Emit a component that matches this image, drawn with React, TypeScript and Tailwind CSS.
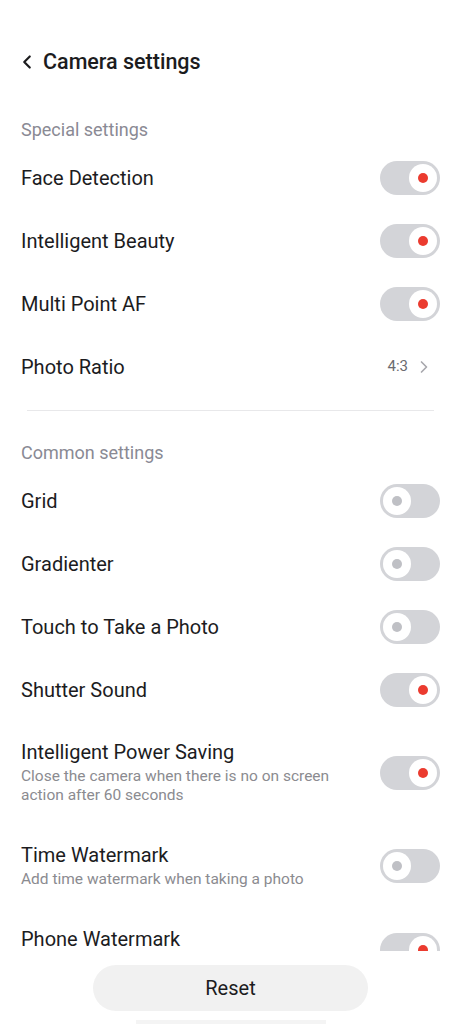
import { ChevronLeft, ChevronRight } from "lucide-react";

type Row = {
  title: string;
  sub?: string;
  on?: boolean;
  value?: string;
};

const SPECIAL: Row[] = [
  { title: "Face Detection", on: true },
  { title: "Intelligent Beauty", on: true },
  { title: "Multi Point AF", on: true },
  { title: "Photo Ratio", value: "4:3" },
];

const COMMON: Row[] = [
  { title: "Grid", on: false },
  { title: "Gradienter", on: false },
  { title: "Touch to Take a Photo", on: false },
  { title: "Shutter Sound", on: true },
];

const DETAILED: Row[] = [
  {
    title: "Intelligent Power Saving",
    sub: "Close the camera when there is no on screen action after 60 seconds",
    on: true,
  },
  { title: "Time Watermark", sub: "Add time watermark when taking a photo", on: false },
  { title: "Phone Watermark", on: true },
];

function Toggle({ on }: { on: boolean }) {
  return (
    <div
      className={`flex h-[34px] w-[60px] shrink-0 items-center rounded-full bg-[#d3d4d8] px-[3px] ${
        on ? "justify-end" : "justify-start"
      }`}
    >
      <div className="flex h-[28px] w-[28px] items-center justify-center rounded-full bg-white">
        <div className={`h-[10px] w-[10px] rounded-full ${on ? "bg-[#eb3b2f]" : "bg-[#bfc0c5]"}`} />
      </div>
    </div>
  );
}

function SimpleRow({ row }: { row: Row }) {
  return (
    <div className="flex h-[63px] items-center justify-between pl-[21px] pr-[21px]">
      <span className="text-[20px] text-[#1c1c1e]">{row.title}</span>
      {row.value ? (
        <div className="-mr-[2px] flex items-center gap-[6px] pr-[8px] text-[#6b6b70]">
          <span className="text-[15px]">{row.value}</span>
          <ChevronRight size={20} strokeWidth={2} className="text-[#a8a8ad]" />
        </div>
      ) : (
        <Toggle on={!!row.on} />
      )}
    </div>
  );
}

function DetailRow({ row }: { row: Row }) {
  return (
    <div className="flex items-center justify-between gap-6 py-[19px] pl-[21px] pr-[21px]">
      <div className="min-h-[46px] max-w-[330px]">
        <p className="text-[20px] leading-[24px] text-[#1c1c1e]">{row.title}</p>
        {row.sub && (
          <p className="mt-[3px] text-[15.5px] leading-[19px] text-[#8b8b90]">{row.sub}</p>
        )}
      </div>
      <Toggle on={!!row.on} />
    </div>
  );
}

function SectionLabel({ children, className }: { children: string; className: string }) {
  return (
    <div className={`flex h-[34px] items-center px-[21px] text-[18px] text-[#8a8a94] ${className}`}>
      {children}
    </div>
  );
}

export default function App() {
  return (
    <div className="flex h-[1024px] w-full flex-col overflow-hidden bg-white font-['Roboto',sans-serif]">
      <div className="h-[951px] overflow-hidden">
        <div className="mt-[31px] flex h-[62px] items-center gap-[5px] pl-[16px]">
          <ChevronLeft size={22} strokeWidth={2.4} className="text-[#1c1c1e]" />
          <h1 className="text-[21.5px] font-medium text-[#1c1c1e]">Camera settings</h1>
        </div>

        <SectionLabel className="mt-[19px]">Special settings</SectionLabel>
        {SPECIAL.map((r) => (
          <SimpleRow key={r.title} row={r} />
        ))}

        <div className="mx-[27px] mt-[12px] h-px bg-[#e8e8ea]" />

        <SectionLabel className="mt-[24px]">Common settings</SectionLabel>
        {COMMON.map((r) => (
          <SimpleRow key={r.title} row={r} />
        ))}
        {DETAILED.map((r) => (
          <DetailRow key={r.title} row={r} />
        ))}
      </div>

      <div className="flex flex-col items-center">
        <button className="mt-[14px] flex h-[46px] w-[275px] items-center justify-center rounded-full bg-[#f1f1f1] text-[20px] text-[#1c1c1e]">
          Reset
        </button>
        <div className="mt-[9px] h-[4px] w-[190px] bg-[#f4f4f4]" />
      </div>
    </div>
  );
}
